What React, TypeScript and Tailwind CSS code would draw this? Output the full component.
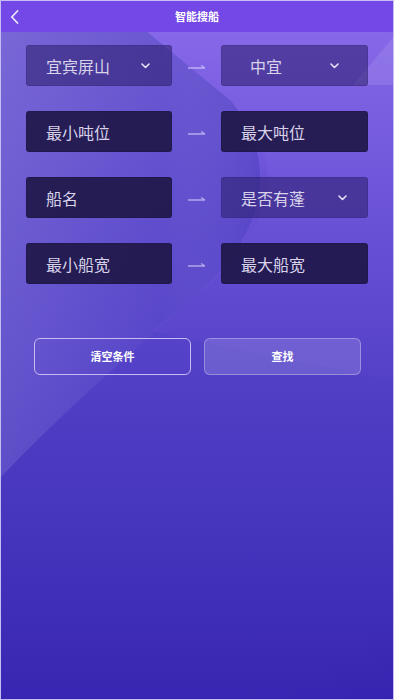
import React from "react";

const font = { fontFamily: '"Noto Sans CJK SC", "Noto Sans", sans-serif' };

const Chevron = ({ className = "" }: { className?: string }) => (
  <svg width="9" height="6" viewBox="0 0 9 6" className={className}>
    <path d="M1 1 L4.5 4.5 L8 1" fill="none" stroke="#e6e1f7" strokeWidth="1.6" strokeLinecap="round" strokeLinejoin="round" />
  </svg>
);

const Arrow = () => (
  <svg width="18" height="6" viewBox="0 0 18 6" className="opacity-60">
    <path d="M0 4 H17 M13 1.5 L17 4" fill="none" stroke="#e8e2ff" strokeWidth="1.3" />
  </svg>
);

type BoxProps = {
  text: string;
  select?: boolean;
  textClass?: string;
  chevronClass?: string;
};

const Box = ({ text, select, textClass = "pl-[19px]", chevronClass = "mr-[20px]" }: BoxProps) => (
  <div
    className={
      "flex items-center justify-between h-[41px] rounded-[3px] border " +
      (select
        ? "bg-[#2a1d6a]/55 border-[#2a1d6a]/20"
        : "bg-[#1e1646]/90 border-[#1a1240]/30")
    }
  >
    <span className={"text-[16px] text-[#d8d3ea] leading-none " + textClass}>{text}</span>
    {select && <Chevron className={chevronClass} />}
  </div>
);

export default function App() {
  const rows: [BoxProps, BoxProps][] = [
    [
      { text: "宜宾屏山", select: true, chevronClass: "mr-[21px]" },
      { text: "中宜", select: true, textClass: "pl-[28px]", chevronClass: "mr-[28px]" },
    ],
    [{ text: "最小吨位" }, { text: "最大吨位" }],
    [{ text: "船名" }, { text: "是否有蓬", select: true, chevronClass: "mr-[20px]" }],
    [{ text: "最小船宽" }, { text: "最大船宽" }],
  ];

  return (
    <div
      style={font}
      className="relative w-[394px] h-[700px] overflow-hidden border border-[#c6bdf3] bg-linear-to-b from-[#6a56d2] via-[#5442c8] to-[#3826b2]"
    >
      {/* background decoration */}
      <svg className="absolute inset-0" width="394" height="700" viewBox="0 0 394 700">
        <defs>
          <linearGradient id="lite" x1="0" y1="0" x2="1" y2="0">
            <stop offset="0" stopColor="#ffffff" stopOpacity="0.11" />
            <stop offset="0.6" stopColor="#ffffff" stopOpacity="0.02" />
            <stop offset="1" stopColor="#1a10a0" stopOpacity="0.12" />
          </linearGradient>
          <linearGradient id="purp" x1="0" y1="0" x2="0" y2="1">
            <stop offset="0" stopColor="#a47cff" stopOpacity="0.5" />
            <stop offset="1" stopColor="#8a5cf0" stopOpacity="0.03" />
          </linearGradient>
          <radialGradient id="dark" cx="1" cy="1" r="1">
            <stop offset="0" stopColor="#2a18a8" stopOpacity="0.5" />
            <stop offset="1" stopColor="#2a18a8" stopOpacity="0" />
          </radialGradient>
        </defs>
        <path
          d="M0 30 L145 30 L230 100 C 292 160 272 232 192 298 C 120 360 55 418 0 476 Z"
          fill="url(#lite)"
        />
        <path
          d="M145 30 L394 30 L394 380 L150 330 C 250 262 292 178 230 100 Z"
          fill="url(#purp)"
        />
        <path d="M394 34 L394 84 L352 84 Z" fill="#ffffff" opacity="0.1" />
        <ellipse cx="394" cy="700" rx="160" ry="110" fill="url(#dark)" />
      </svg>

      {/* header */}
      <div className="relative flex items-center justify-center h-[31px] bg-[#7448e6]">
        <svg width="9" height="14" viewBox="0 0 9 14" className="absolute left-[9px] top-[9px]">
          <path d="M7.5 1 L1.8 7 L7.5 13" fill="none" stroke="#ece6ff" strokeWidth="1.8" strokeLinecap="round" strokeLinejoin="round" />
        </svg>
        <span className="text-[11px] font-bold text-white">智能搜船</span>
      </div>

      {/* form */}
      <div className="relative flex flex-col gap-[25px] pt-[13px] px-[25px]">
        {rows.map(([l, r], i) => (
          <div key={i} className="grid grid-cols-[146px_1fr_147px] items-center">
            <Box {...l} />
            <div className="flex justify-center pt-[3px]">
              <Arrow />
            </div>
            <Box {...r} />
          </div>
        ))}
      </div>

      {/* buttons */}
      <div className="relative flex gap-[13px] pl-[33px] mt-[54px]">
        <button className="w-[157px] h-[37px] rounded-[6px] border-[1.5px] border-[#c7bbf6] text-[11px] font-bold text-white">
          清空条件
        </button>
        <button className="w-[157px] h-[37px] rounded-[6px] border border-white/30 bg-white/15 text-[11px] font-bold text-white">
          查找
        </button>
      </div>
    </div>
  );
}
